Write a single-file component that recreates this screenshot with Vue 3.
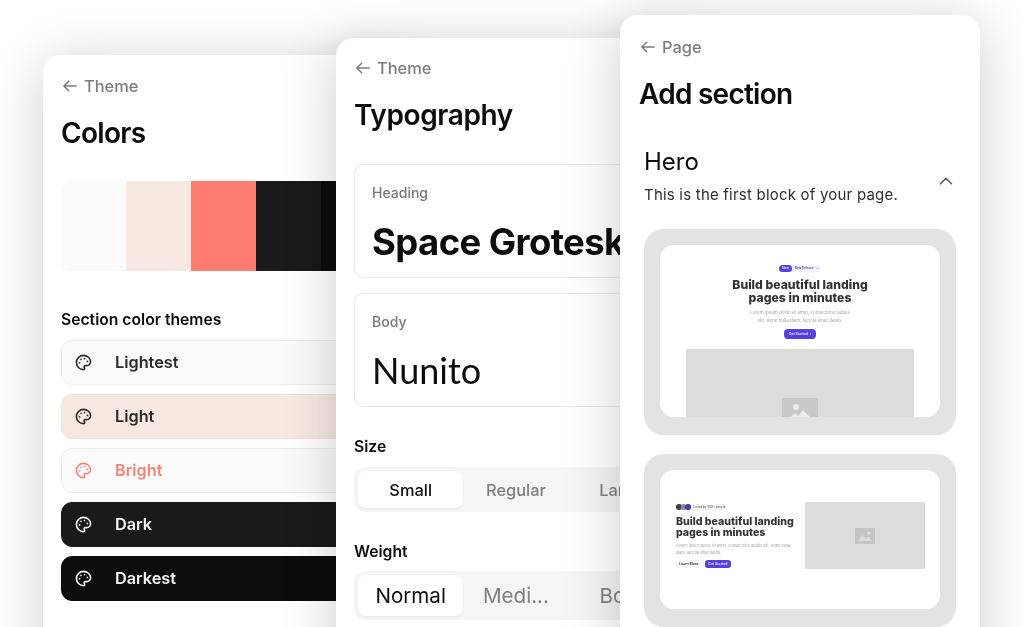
<script setup>
const swatches = ['#fafafa', '#f7e8e2', '#ff7d70', '#1a1a1a', '#0d0d0d']
const themes = [
  { name: 'Lightest', cls: 'lightest' },
  { name: 'Light', cls: 'light' },
  { name: 'Bright', cls: 'bright' },
  { name: 'Dark', cls: 'dark' },
  { name: 'Darkest', cls: 'darkest' },
]
</script>

<template>
  <div class="stage">
    <section class="panel colors">
      <div class="back">
        <svg class="arrow" viewBox="4 4 16 16"><path d="M19 12H5M10.500 17.500L5 12l5.500-5.500" /></svg>
        <span>Theme</span>
      </div>
      <h1>Colors</h1>
      <div class="swatches">
        <div v-for="c in swatches" :key="c" class="swatch" :style="{ background: c }"></div>
      </div>
      <h2 class="themes-title">Section color themes</h2>
      <div class="themes">
        <div v-for="t in themes" :key="t.name" class="theme" :class="t.cls">
          <svg class="palette" viewBox="0 0 24 24">
            <circle cx="13.5" cy="6.5" r="1.200" class="dot" />
            <circle cx="17.5" cy="10.500" r="1.200" class="dot" />
            <circle cx="8.5" cy="7.5" r="1.200" class="dot" />
            <circle cx="6.5" cy="12.5" r="1.200" class="dot" />
            <path d="M12 2C6.5 2 2 6.5 2 12s4.5 10 10 10c.926 0 1.648-.746 1.648-1.688 0-.437-.18-.835-.437-1.125-.29-.289-.438-.652-.438-1.125a1.64 1.64 0 0 1 1.668-1.668h1.996c3.051 0 5.555-2.503 5.555-5.554C21.965 6.012 17.461 2 12 2z" />
          </svg>
          <span>{{ t.name }}</span>
        </div>
      </div>
    </section>

    <section class="panel typo">
      <div class="back">
        <svg class="arrow" viewBox="4 4 16 16"><path d="M19 12H5M10.500 17.500L5 12l5.500-5.500" /></svg>
        <span>Theme</span>
      </div>
      <h1>Typography</h1>
      <div class="font-box first">
        <div class="font-label">Heading</div>
        <div class="font-name heading">Space Grotesk</div>
      </div>
      <div class="font-box second">
        <div class="font-label">Body</div>
        <div class="font-name body">Nunito</div>
      </div>
      <h2 class="seg-title size-title">Size</h2>
      <div class="seg size">
        <div class="opt on">Small</div>
        <div class="opt">Regular</div>
        <div class="opt">Large</div>
      </div>
      <h2 class="seg-title weight-title">Weight</h2>
      <div class="seg weight">
        <div class="opt on">Normal</div>
        <div class="opt">Medi...</div>
        <div class="opt">Bold</div>
      </div>
    </section>

    <section class="panel add">
      <div class="back">
        <svg class="arrow" viewBox="4 4 16 16"><path d="M19 12H5M10.500 17.500L5 12l5.500-5.500" /></svg>
        <span>Page</span>
      </div>
      <h1>Add section</h1>
      <div class="hero-head">
        <div>
          <div class="hero-title">Hero</div>
          <div class="hero-desc">This is the first block of your page.</div>
        </div>
        <svg class="chev" viewBox="0 0 24 24"><path d="M6 15l6-6 6 6" /></svg>
      </div>

      <div class="frame one">
        <div class="inner centered">
          <div class="pill">
            <span class="pill-new">New</span>
            <span class="pill-text">New Release</span>
            <span class="pill-text">›</span>
          </div>
          <div class="p-title">Build beautiful landing<br />pages in minutes</div>
          <div class="p-copy">Lorem ipsum dolor sit amet, consectetur adipis<br />elit. Aene nulla diam, lacinia vitae dapib.</div>
          <div class="p-btn">Get Started &nbsp;›</div>
          <div class="ph wide">
            <svg class="img-ic" viewBox="0 0 36 19">
              <rect width="36" height="19" fill="#c8c8c8" />
              <circle cx="14" cy="9" r="3" fill="#ececec" />
              <path d="M9 19l4-4 3 3 5-6 7 7z" fill="#ececec" />
            </svg>
          </div>
        </div>
      </div>

      <div class="frame two">
        <div class="inner split">
          <div class="left">
            <div class="loved">
              <span class="avs"><i></i><i class="g"></i><i class="v"></i></span>
              <span>Loved by 500+ people</span>
            </div>
            <div class="p-title small">Build beautiful landing<br />pages in minutes</div>
            <div class="p-copy small">Lorem ipsum dolor sit amet, consectetur adipis elit. Aene nulla<br />diam, lacinia vitae dapib.</div>
            <div class="btns">
              <span class="learn">Learn More</span>
              <span class="p-btn tight">Get Started</span>
            </div>
          </div>
          <div class="ph side">
            <svg class="img-ic2" viewBox="0 0 20 16">
              <rect width="20" height="16" fill="#c4c4c4" />
              <circle cx="13.5" cy="5" r="1.6" fill="#dcdcdc" />
              <path d="M2.5 13l5-6 3.5 4 2.5-2.500 4 4.500z" fill="#dcdcdc" />
            </svg>
          </div>
        </div>
      </div>
    </section>
  </div>
</template>

<style>
html, body { margin: 0; background: #fff; }
</style>

<style scoped>
.stage {
  position: relative;
  width: 1024px;
  height: 627px;
  overflow: hidden;
  background: #fff;
  font-family: Inter, "Liberation Sans", sans-serif;
  color: #0d0d0d;
  filter: blur(0.35px);
}
.panel {
  position: absolute;
  width: 360px;
  box-sizing: border-box;
  height: 700px;
  background: #fff;
  border-radius: 18px;
  box-shadow: 0 8px 56px rgba(0, 0, 0, 0.2);
}
.colors { left: 43px; top: 55px; padding: 22px 18px; }
.typo { left: 336px; top: 38px; padding: 21px 18px; }
.add { left: 620px; top: 15px; padding: 23px 24px 0 19px; }

.back {
  display: flex;
  align-items: center;
  gap: 6px;
  height: 18px;
  padding-left: 2px;
  font-size: 16.4px;
  font-weight: 500;
  color: #7c7c7c;
}
.arrow { width: 14px; height: 14px; margin-right: 1px; fill: none; stroke: #7c7c7c; stroke-width: 1.800; stroke-linecap: round; stroke-linejoin: round; }
h1 {
  margin: 0;
  font-size: 28px;
  line-height: 34px;
  font-weight: 600;
  letter-spacing: -0.4px;
}
.colors h1 { margin-top: 21px; letter-spacing: -0.7px; }
.typo h1 { margin-top: 21px; }
.add h1 { margin-top: 21px; letter-spacing: -0.75px; }

.swatches {
  display: flex;
  width: 325px;
  height: 90px;
  margin-top: 31px;
  border-radius: 10px;
  overflow: hidden;
  box-shadow: inset 0 0 0 1px #eee;
}
.swatch { flex: 1; }
.themes-title { margin: 40px 0 0; font-size: 15.7px; line-height: 18px; font-weight: 600; }
.themes { display: flex; flex-direction: column; gap: 9px; margin-top: 11px; }
.theme {
  display: flex;
  align-items: center;
  height: 45px;
  box-sizing: border-box;
  padding-left: 14px;
  border-radius: 11px;
  border: 1px solid #ececec;
  background: #fafafa;
  font-size: 16.3px;
  line-height: 20px;
  font-weight: 600;
  color: #2a2a2a;
}
.theme span { margin-left: 22px; position: relative; top: -0.5px; }
.palette { width: 17px; height: 17px; flex: none; margin-left: -1px; margin-right: 1px; fill: none; stroke: currentColor; stroke-width: 2.300; stroke-linecap: round; stroke-linejoin: round; }
.dot { fill: currentColor; stroke: none; }
.light { background: #f7e8e2; border-color: #efe0da; }
.bright { color: #f0857a; background: #fbfafa; }
.dark { background: #1a1a1a; border-color: #1a1a1a; color: #f5f5f5; }
.darkest { background: #0d0d0d; border-color: #0d0d0d; color: #f5f5f5; }

.font-box {
  height: 114px;
  box-sizing: border-box;
  padding: 19px 17px;
  border: 1px solid #e8e8e8;
  border-radius: 10px;
}
.first { margin-top: 32px; }
.second { margin-top: 15px; }
.font-label { font-size: 14px; line-height: 17px; font-weight: 500; color: #777; }
.font-name { margin-top: 19px; font-size: 36.5px; line-height: 44px; white-space: nowrap; }
.heading { font-weight: 700; letter-spacing: -0.6px; }
.body { font-family: Lato, sans-serif; font-weight: 400; font-size: 36px; margin-top: 18px; }
.seg-title { margin: 0; font-size: 15.7px; line-height: 18px; font-weight: 600; }
.size-title { margin-top: 31px; }
.weight-title { margin-top: 31px; }
.seg {
  display: flex;
  margin-top: 11px;
  padding: 4px;
  background: #f5f5f5;
  border-radius: 10px;
}
.opt {
  flex: 1;
  display: flex;
  align-items: center;
  justify-content: center;
  color: #808080;
  font-weight: 500;
}
.on { background: #fff; color: #0d0d0d; border-radius: 8px; box-shadow: 0 1px 3px rgba(0,0,0,.05); }
.size .opt { height: 37px; font-size: 16.4px; }
.weight { margin-top: 10px; }
.weight .opt { height: 41px; font-size: 20.6px; font-weight: 400; }

.hero-head { display: flex; align-items: center; justify-content: space-between; padding: 0 0 0 5px; margin-top: 36px; }
.hero-title { font-size: 24px; line-height: 30px; font-weight: 400; }
.hero-desc { margin-top: 9px; font-size: 15px; line-height: 18px; color: #2e2e2e; letter-spacing: 0.21px; }
.chev { width: 22px; height: 22px; margin-right: -1px; margin-top: 10px; fill: none; stroke: #555; stroke-width: 1.600; stroke-linecap: round; stroke-linejoin: round; }

.frame {
  box-sizing: border-box;
  width: 312px;
  margin-left: 5px;
  padding: 16px;
  background: #e2e3e5;
  border-radius: 20px;
}
.one { margin-top: 25px; height: 206px; }
.two { margin-top: 19px; height: 173px; }
.inner { height: 100%; background: #fff; border-radius: 14px; overflow: hidden; }
.one .inner { height: 172px; }
.two .inner { height: 139px; }
.centered { display: flex; flex-direction: column; align-items: center; padding-top: 20px; box-sizing: border-box; }
.pill {
  display: flex; align-items: center; gap: 2px;
  height: 7px; padding-right: 3px;
  border-radius: 4px; background: #f2f0fc;
  font-size: 3px; line-height: 7px; font-weight: 600; color: #4c3fc0;
}
.pill-new { display: flex; align-items: center; padding: 0 3px; height: 7px; border-radius: 4px; background: #5a3fe0; color: #fff; }
.pill-text { margin-left: 1px; }
.p-title {
  margin-top: 5.500px;
  font-size: 12.2px;
  line-height: 13px;
  font-weight: 800;
  color: #333;
  text-align: center;
  white-space: nowrap;
}
.p-copy { margin-top: 5px; font-size: 4.5px; line-height: 8px; color: #a4a4a4; text-align: center; white-space: nowrap; }
.p-btn {
  display: flex; align-items: center;
  height: 10px; margin-top: 4.5px; padding: 0 5px;
  border-radius: 4px; background: #5a3fe0;
  color: #e8e6ff; font-size: 3.500px; line-height: 10px; font-weight: 600;
}
.ph { background: #dcdcdc; border-radius: 1px; display: flex; justify-content: center; }
.wide { width: 228px; height: 68px; margin-top: 10px; flex: none; align-items: flex-end; }
.img-ic { width: 36px; height: 19px; display: block; }
.split { display: flex; padding: 32px 15px 0 16px; box-sizing: border-box; align-items: flex-start; justify-content: space-between; }
.left { width: 118px; }
.loved { display: flex; width: fit-content; align-items: center; gap: 2px; height: 7px; padding-right: 2px; border-radius: 3px; background: #f6f6f6; margin-top: 1.5px; font-size: 3px; line-height: 7px; color: #555; white-space: nowrap; }
.avs { display: flex; }
.avs i { display: block; width: 5.500px; height: 5.500px; border-radius: 50%; background: #444; margin-right: -1px; }
.avs i.g { background: #888; }
.avs i.v { background: #4a3ab0; margin-right: 1px; }
.p-title.small { margin-top: 5px; text-align: left; font-size: 10.6px; line-height: 11px; }
.p-copy.small { margin-top: 4.5px; font-size: 3.9px; line-height: 7px; text-align: left; }
.btns { display: flex; gap: 4px; align-items: center; margin-top: 4px; }
.learn { font-size: 3.500px; line-height: 8px; font-weight: 600; color: #333; padding: 0 3px; background: #f6f6f6; border-radius: 3px; white-space: nowrap; }
.p-btn.tight { margin-top: 0; height: 8px; line-height: 8px; white-space: nowrap; border-radius: 3px; padding: 0 3px; }
.side { width: 120px; height: 67px; align-items: center; flex: none; }
.img-ic2 { width: 20px; height: 16px; display: block; }
</style>
